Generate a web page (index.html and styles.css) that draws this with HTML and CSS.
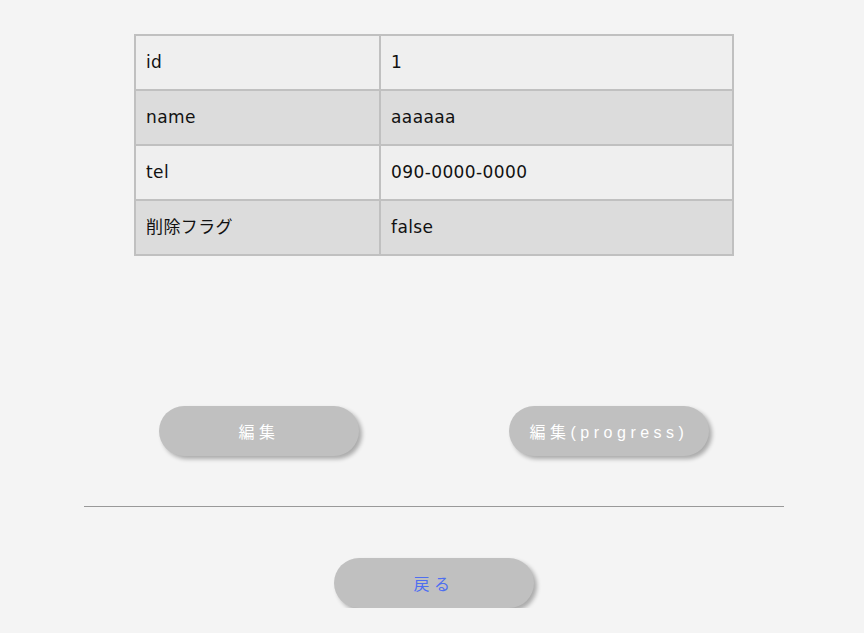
FILE: index.html
```html
<!DOCTYPE html>
<html lang="ja">
<head>
<meta charset="utf-8">
<link rel="stylesheet" href="styles.css">
</head>
<body>
<div class="page">
  <table class="detail">
    <tr class="odd"><td class="key">id</td><td>1</td></tr>
    <tr class="even"><td class="key">name</td><td>aaaaaa</td></tr>
    <tr class="odd"><td class="key">tel</td><td>090-0000-0000</td></tr>
    <tr class="even"><td class="key">削除フラグ</td><td>false</td></tr>
  </table>
  <div class="actions">
    <div class="half"><button class="btn">編集</button></div>
    <div class="half"><button class="btn">編集(progress)</button></div>
  </div>
  <hr class="rule">
  <div class="back-row"><button class="btn back">戻る</button></div>
</div>
</body>
</html>
```

FILE: styles.css
```css
html, body {
  margin: 0;
  padding: 0;
  background: #f4f4f4;
}
body {
  padding-left: 4px;
  font-family: "DejaVu Sans", "Noto Sans CJK JP", sans-serif;
  color: #111;
}
.page {
  width: 700px;
  margin: 0 auto;
  padding-top: 34px;
}
.detail {
  width: 600px;
  margin: 0 auto;
  border-collapse: collapse;
  border: 2px solid #c0c0c0;
}
.detail td {
  height: 55px;
  padding: 0 10px;
  border: 2px solid #c0c0c0;
  font-size: 17px;
  letter-spacing: 0.4px;
  line-height: 1;
  box-sizing: border-box;
}
.detail td.key {
  width: 245px;
}
.odd td { background: #efefef; }
.even td { background: #dcdcdc; }
.actions {
  display: flex;
  margin-top: 150px;
}
.half {
  flex: 1;
  display: flex;
  justify-content: center;
}
.btn {
  width: 200px;
  height: 50px;
  border: none;
  border-radius: 25px;
  background: #c0c0c0;
  color: #fff;
  font-family: "Liberation Sans", "Noto Sans CJK JP", sans-serif;
  font-size: 16px;
  letter-spacing: 4.5px;
  box-shadow: 3px 3px 4px rgba(0,0,0,0.3);
  padding: 0;
}
.rule {
  margin: 50px 0 0;
  border: none;
  border-top: 1px solid #999;
  height: 0;
}
.back-row {
  display: flex;
  justify-content: center;
  margin-top: 51px;
}
.btn.back {
  color: #4f6ff0;
}
```
